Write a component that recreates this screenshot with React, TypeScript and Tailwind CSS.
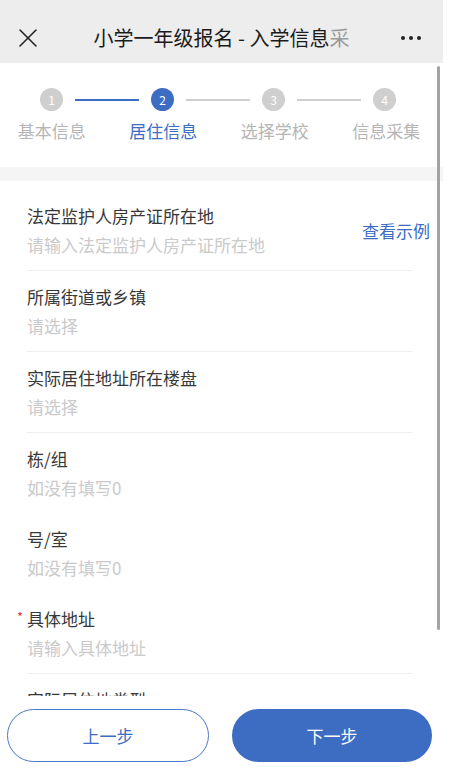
import { X } from 'lucide-react';

const steps = ['基本信息', '居住信息', '选择学校', '信息采集'];

const fields = [
    { label: '法定监护人房产证所在地', hint: '请输入法定监护人房产证所在地', link: true },
    { label: '所属街道或乡镇', hint: '请选择' },
    { label: '实际居住地址所在楼盘', hint: '请选择' },
    { label: '栋/组', hint: '如没有填写0', noLine: true },
    { label: '号/室', hint: '如没有填写0', noLine: true },
    { label: '具体地址', hint: '请输入具体地址', required: true },
    { label: '实际居住地类型', hint: '请选择' },
];

export default function App() {
    return (
        <div
            className="relative h-[770px] w-[449px] overflow-hidden bg-white"
            style={{ fontFamily: '"Noto Sans CJK SC", "Noto Sans", sans-serif' }}
        >
            <div className="relative w-[443px]">
                {/* Header */}
                <header className="flex h-[63px] items-center bg-[#ededed] pt-[12px]">
                    <div className="flex w-[56px] justify-center">
                        <X size={32} strokeWidth={1.6} absoluteStrokeWidth className="text-[#222]" />
                    </div>
                    <h1 className="flex-1 text-center text-[20px] leading-6 text-[#1b1b1b]">
                        小学一年级报名 - 入学信息<span className="text-[#9a9a9a]">采</span>
                    </h1>
                    <div className="flex w-[56px] justify-center gap-[4px] pr-[8px]">
                        <span className="h-[4px] w-[4px] rounded-full bg-[#222]" />
                        <span className="h-[4px] w-[4px] rounded-full bg-[#222]" />
                        <span className="h-[4px] w-[4px] rounded-full bg-[#222]" />
                    </div>
                </header>

                {/* Steps */}
                <section className="pb-[24px] pt-[25px]">
                    <div className="flex items-center pl-[40px]">
                        {steps.map((s, i) => (
                            <div key={s} className="flex items-center">
                                <span
                                    className={
                                        i === 1
                                            ? 'flex h-[23px] w-[23px] items-center justify-center rounded-full bg-[#3d6dc2] text-[12px] text-white'
                                            : 'flex h-[23px] w-[23px] items-center justify-center rounded-full bg-[#cfcfcf] text-[12px] text-white'
                                    }
                                >
                                    {i + 1}
                                </span>
                                {i < 3 && (
                                    <span
                                        className={
                                            i === 0
                                                ? 'mx-[12px] h-[2px] w-[64px] bg-[#3d6dc2]'
                                                : 'mx-[12px] h-[2px] w-[64px] bg-[#cfcfcf]'
                                        }
                                    />
                                )}
                            </div>
                        ))}
                    </div>
                    <div className="-ml-[4px] mt-[8px] grid w-[446px] grid-cols-4">
                        {steps.map((s, i) => (
                            <span
                                key={s}
                                className={
                                    i === 1
                                        ? 'text-center text-[17px] leading-6 text-[#3d6dc2]'
                                        : 'text-center text-[17px] leading-6 text-[#b5b5b5]'
                                }
                            >
                                {s}
                            </span>
                        ))}
                    </div>
                </section>

                <div className="h-[14px] bg-[#f5f5f5]" />

                {/* Form */}
                <section className="pt-[9px]">
                    {fields.map((f) => (
                        <div
                            key={f.label}
                            className={
                                f.noLine
                                    ? 'ml-[27px] mr-[31px] flex items-center pb-[13px] pt-[14px]'
                                    : 'ml-[27px] mr-[31px] flex items-center border-b border-[#eeeeee] pb-[13px] pt-[14px]'
                            }
                        >
                            <div className="flex-1">
                                <div className="relative text-[17px] leading-6 text-[#383838]">
                                    {f.required && (
                                        <span className="absolute -left-[10px] top-[-2px] text-[13px] text-[#e23c3c]">*</span>
                                    )}
                                    {f.label}
                                </div>
                                <div className="mt-[5px] text-[17px] leading-6 text-[#cacaca]">{f.hint}</div>
                            </div>
                            {f.link && (
                                <span className="-mr-[18px] text-[17px] leading-6 text-[#3d6dc2]">查看示例</span>
                            )}
                        </div>
                    ))}
                </section>

                {/* Scrollbar */}
                <div className="absolute left-[437px] top-[66px] h-[564px] w-[3px] rounded-full bg-[#a3a3a3]" />
            </div>

            {/* Footer */}
            <footer className="absolute bottom-0 left-0 flex w-[443px] gap-[23px] bg-white pb-[8px] pl-[7px] pr-[11px] pt-[13px]">
                <button className="h-[53px] flex-1 rounded-full border-[1.5px] border-[#4a78c8] text-[17px] text-[#3d6dc2]">
                    上一步
                </button>
                <button className="h-[53px] flex-1 rounded-full bg-[#3d6dc2] text-[17px] text-white">
                    下一步
                </button>
            </footer>
        </div>
    );
}
